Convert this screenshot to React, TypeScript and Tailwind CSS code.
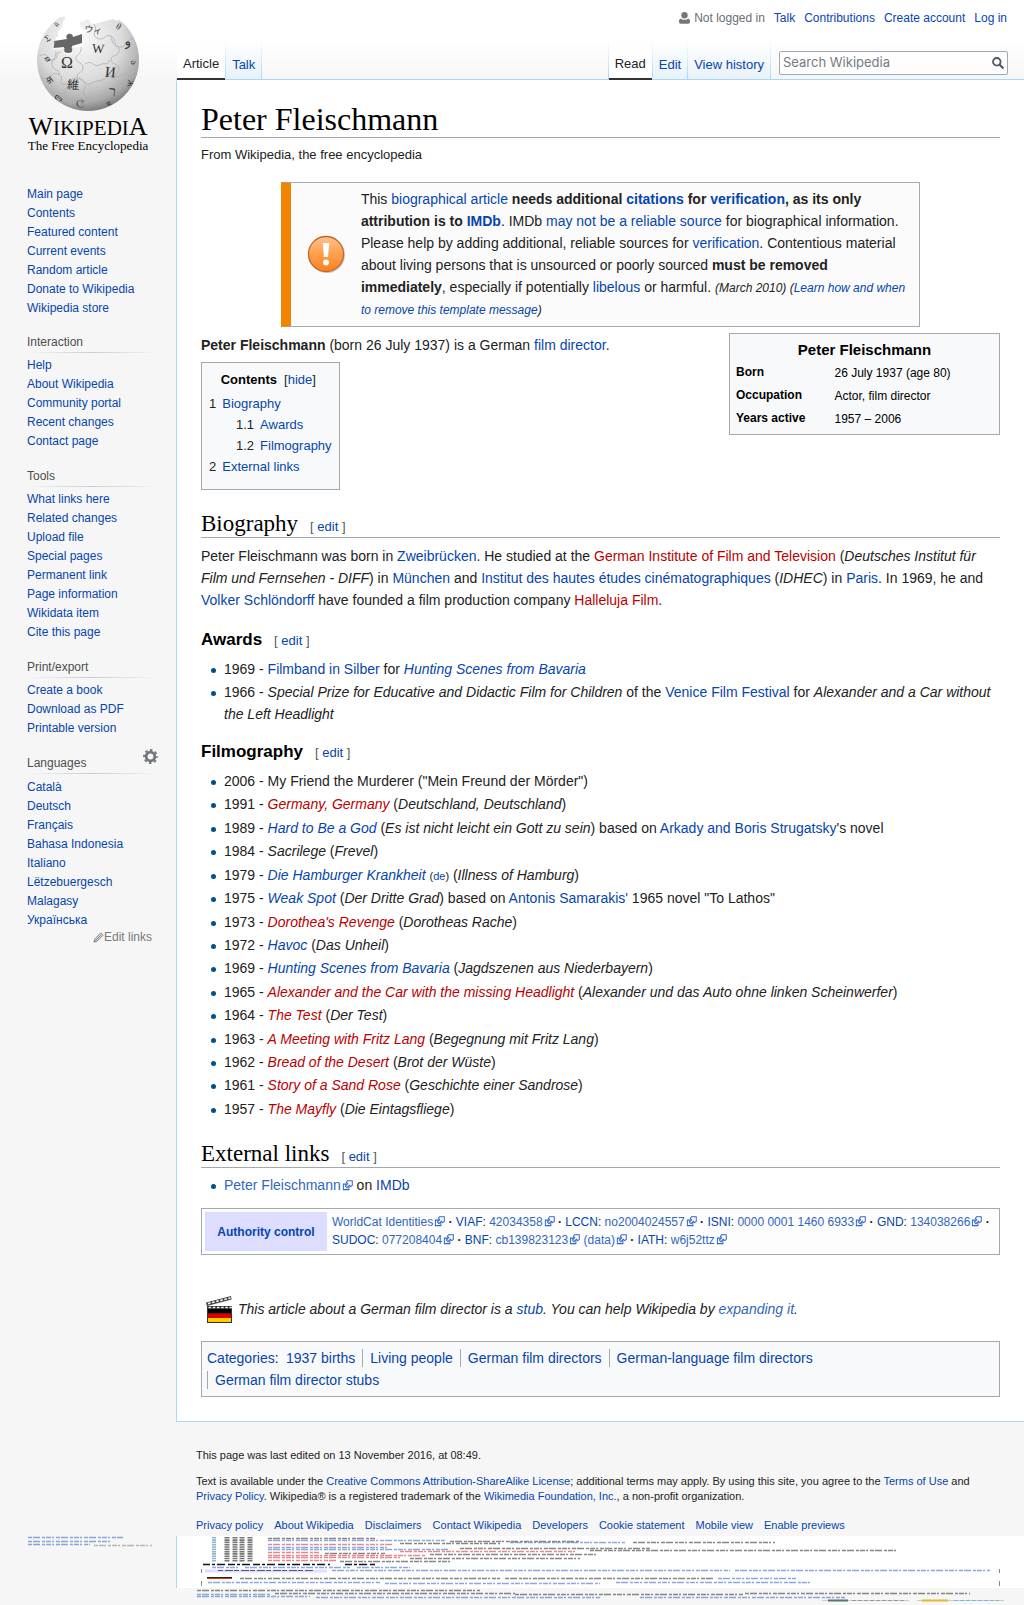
import React from 'react';

type P = { children?: React.ReactNode; className?: string };
const A = ({ children, className = '' }: P) => (
  <a href="#" className={`text-[#0645ad] ${className}`}>{children}</a>
);
const Red = ({ children }: P) => <a href="#" className="text-[#ba0000]">{children}</a>;

const ExtIcon = () => (
  <svg viewBox="0 0 12 12" className="ml-px inline-block size-[11px] align-[-1px]" fill="#fff" stroke="#36c" strokeWidth="1.100">
    <path d="M1.500 4.500h6v6h-6z" />
    <path d="M6 .8h5.200V6L9.400 7.200 8 5.800 5.400 8.400 3.600 6.600 6.200 4 4.800 2.600z" />
  </svg>
);
const Ext = ({ children, className = '' }: P) => (
  <a href="#" className={`text-[#36b] ${className}`}>{children}<ExtIcon /></a>
);

const glyphs: [string, number, number, number, number][] = [
  ['Ω', 30, 51, 16, 0], ['W', 61, 36, 13, 4], ['И', 73, 60, 15, 6], ['維', 36, 72, 12, 3],
  ['ウィ', 56, 16, 9, 8], ['ר', 75, 79, 14, 6], ['و', 91, 28, 13, -10], ['Σ', 12, 24, 9, -30],
  ['θ', 80, 12, 9, 30], ['ල', 43, 88, 11, 10], ['ø', 8, 43, 10, 70], ['क', 10, 65, 9, 55],
  ['ა', 94, 46, 9, 80], ['Ж', 91, 66, 8, 100], ['ლ', 20, 83, 8, 40], ['म', 73, 89, 7, -25], ['й', 21, 9, 7, -45],
];
const Globe = () => (
  <svg viewBox="0 0 103 94" className="mx-auto block h-[94px] w-[103px]">
    <defs>
      <radialGradient id="ball" cx=".42" cy=".3" r=".72">
        <stop offset="0" stopColor="#fafafa" />
        <stop offset=".55" stopColor="#dcdcdc" />
        <stop offset=".85" stopColor="#a9a9a9" />
        <stop offset="1" stopColor="#737373" />
      </radialGradient>
      <clipPath id="ballclip"><circle cx="51" cy="43" r="51" /></clipPath>
    </defs>
    <g clipPath="url(#ballclip)">
      <path
        fill="url(#ball)"
        d="M-1-9H28V2C24 6 27 10 23 13C18 15 24 18 19 21L17 24L19 30H45V17L49 15C45 12 43 9 43 4C46 6 48 5 48 3C51 2 53 2 53 6L57 7L76 2L80 4L86 1V-9H104V95H-1z"
      />
      <path fill="#666" d="M17 24l13-2c-3-6 6-7 6-2l9-3v9l-10 3c0 2 3 6-3 7-7 0-5-4-5-6l-11 1z" />
      <path fill="none" stroke="#fff" strokeWidth=".8" d="M17 25l-1 7 11-1c0 3-2 6 5 6 6-1 3-5 3-7l10-3" />
      <g fill="none" stroke="#b0b0b0" strokeWidth=".8">
        <path d="M2 39c11-5 7 5 14 4s1-8 8-8M44 30c1 8-6 7-5 12s8 3 7 9-6 4-6 8 6 3 8 8-4 7-1 11 9 0 9 7" />
        <path d="M4 61c12 3 9-7 17-4s-1 10 6 10 5-7 14-6 6 9 14 5 10-1 15-6 10 3 15-2 6 4 15 0" />
        <path d="M57 7c5 8-4 10 3 14s8-5 14-2 2 11 9 11 5-7 14-9M74 19c2 14 9 8 8 15s-9 3-8 9 9 3 8 9-5 4-5 8 8 4 6 10-9 2-9 8M48 47c8-5 8 4 14 1s10 1 10-5" />
        <path d="M19 34c0 10-5 7-4 14s8 3 7 10M11 76c9-5 6 4 13 2s3-9 9-10M24 79c1 9 8 2 9 9M33 88c9-8 12 3 19-4s10 3 14-4 10 1 13-5" />
      </g>
      <g fill="#333" fontFamily="'Liberation Serif','DejaVu Serif','Noto Sans CJK JP',serif" textAnchor="middle">
        {glyphs.map(([g, x, y, s, r]) => (
          <text key={g} x={x} y={y} fontSize={s} transform={`rotate(${r} ${x} ${y})`}>{g}</text>
        ))}
      </g>
    </g>
  </svg>
);

const Logo = () => (
  <a href="#" aria-label="Wikipedia" className="block pt-[17px] text-black">
    <Globe />
    <span className="mt-[5px] block text-center font-['Liberation_Serif',serif] text-[21px] leading-[22px] whitespace-nowrap">
      <span className="text-[26px]">W</span>IKIPEDI<span className="text-[26px]">A</span>
    </span>
    <span className="block text-center font-['Liberation_Serif',serif] text-[13px] leading-[14px]">The Free Encyclopedia</span>
  </a>
);

const menus: { title: string; items: string[] }[] = [
  { title: '', items: ['Main page', 'Contents', 'Featured content', 'Current events', 'Random article', 'Donate to Wikipedia', 'Wikipedia store'] },
  { title: 'Interaction', items: ['Help', 'About Wikipedia', 'Community portal', 'Recent changes', 'Contact page'] },
  { title: 'Tools', items: ['What links here', 'Related changes', 'Upload file', 'Special pages', 'Permanent link', 'Page information', 'Wikidata item', 'Cite this page'] },
  { title: 'Print/export', items: ['Create a book', 'Download as PDF', 'Printable version'] },
  { title: 'Languages', items: ['Català', 'Deutsch', 'Français', 'Bahasa Indonesia', 'Italiano', 'Lëtzebuergesch', 'Malagasy', 'Українська'] },
];

const Gear = () => (
  <button type="button" aria-label="Language settings" className="mb-[14px]">
    <svg viewBox="0 0 16 16" className="size-[15px]" fill="none" stroke="#72777d">
      <circle cx="8" cy="8" r="4.600" strokeWidth="3" />
      <circle cx="8" cy="8" r="6.900" strokeWidth="2" strokeDasharray="2.700 2.720" strokeDashoffset="1.350" />
    </svg>
  </button>
);

const Sidebar = () => (
  <div className="w-44 shrink-0 text-xs">
    <Logo />
    <div className="pt-8 pr-[18px] pl-[27px]">
      {menus.map(({ title, items }) => (
        <nav key={title} className="mb-[15px] first:mb-[14px]">
          {title && (
            <>
              <div className="flex h-5 items-center justify-between text-[#4d4d4d]">
                <h3>{title}</h3>
                {title === 'Languages' && <Gear />}
              </div>
              <div className={`h-px bg-linear-to-r from-transparent via-[#c8ccd1] to-transparent ${title === 'Languages' ? 'mb-1' : 'mb-[3px]'}`} />
            </>
          )}
          <ul>
            {items.map((i) => <li key={i} className="leading-[19px]"><A>{i}</A></li>)}
          </ul>
          {title === 'Languages' && (
            <a href="#" className="flex items-center justify-end pr-1.5 leading-[14px] text-[#797979]">
              <svg viewBox="0 0 12 12" className="size-[11px]" fill="#ddd" stroke="#797979">
                <path d="M1 11l1-3.500L8.500 1l2.500 2.500L4.500 10z" />
                <path d="M2.500 9.500l6-6" />
              </svg>
              Edit links
            </a>
          )}
        </nav>
      ))}
    </div>
  </div>
);

const Tab = ({ children, active }: P & { active?: boolean }) => (
  <li className={`relative flex h-10 items-center px-[6px] pt-2.5 ${active ? 'border-b-2 border-[#333] bg-linear-to-b from-transparent to-white to-40%' : 'border-b border-[#a7d7f9] bg-linear-to-b from-white to-[#e8f2f8]'}`}>
    <a href="#" className={active ? 'text-[#222]' : 'text-[#0645ad]'}>{children}</a>
    <span className="absolute top-0 -right-px h-full w-px bg-linear-to-b from-white to-[#a7d7f9]" />
  </li>
);

const Header = () => (
  <header>
    <ul className="flex h-[35px] items-center justify-end gap-[9px] pr-[17px] text-xs">
      <li className="flex items-center gap-1 text-[#6b6e72]">
        <svg viewBox="0 0 11 12" className="h-3 w-[11px]" fill="#72777d">
          <circle cx="5.500" cy="3.200" r="3.200" />
          <path d="M1.500 6.500c2 1.700 6 1.700 8 0 1 .5 1.500 1.500 1.500 3 0 1.500-.6 2.200-1.800 2.200H1.800C.6 11.700 0 11 0 9.500c0-1.500.5-2.500 1.500-3z" />
        </svg>
        Not logged in
      </li>
      {['Talk', 'Contributions', 'Create account', 'Log in'].map((t) => <li key={t}><A>{t}</A></li>)}
    </ul>
    <div className="flex h-[45px] items-end justify-between text-[13px]">
      <ul className="flex gap-px"><Tab active>Article</Tab><Tab>Talk</Tab></ul>
      <div className="flex items-end">
        <ul className="relative flex gap-px">
          <li aria-hidden className="absolute top-0 -left-px h-full w-px bg-linear-to-b from-white to-[#a7d7f9]" />
          <Tab active>Read</Tab><Tab>Edit</Tab><Tab>View history</Tab>
        </ul>
        <form className="mr-4 mb-[5px] ml-[9px] flex h-6 w-[229px] items-center rounded-xs border border-[#a2a9b1] bg-white/70 px-[3px]">
          <input aria-label="Search Wikipedia" placeholder="Search Wikipedia" className="min-w-0 flex-1 font-[Inter,sans-serif] text-[13px] outline-none placeholder:text-[#757b80]" />
          <button type="button" aria-label="Search">
            <svg viewBox="0 0 12 12" className="size-3" fill="none" stroke="#54595d" strokeWidth="1.800">
              <circle cx="4.800" cy="4.800" r="3.800" /><path d="M7.500 7.500l4 4" strokeWidth="2.200" />
            </svg>
          </button>
        </form>
      </div>
    </div>
  </header>
);

const Edit = () => (
  <span className="ml-3 font-['Liberation_Sans',sans-serif] text-[13px] leading-none font-normal text-[#54595d]">[ <A>edit</A> ]</span>
);
const H2 = ({ children, className = '' }: P) => (
  <h2 className={`border-b border-[#a2a9b1] font-['Liberation_Serif',serif] text-[23px] leading-[26px] text-black ${className}`}>{children}<Edit /></h2>
);
const H3 = ({ children }: P) => (
  <h3 className="text-[17px] leading-[26px] font-bold text-black">{children}<Edit /></h3>
);
const Li = ({ children }: P) => (
  <li className="flex">
    <span className="mt-[10px] mr-[8px] ml-[10px] size-[5px] shrink-0 rounded-full bg-[#00528c]" />
    <div>{children}</div>
  </li>
);

const Warning = () => (
  <svg viewBox="0 0 40 40" className="size-10">
    <defs>
      <linearGradient id="warn" x2="0" y2="1"><stop stopColor="#ffc18c" /><stop offset=".5" stopColor="#ffa04e" /><stop offset="1" stopColor="#f9801e" /></linearGradient>
    </defs>
    <circle cx="21" cy="21" r="18" fill="#000" opacity=".2" />
    <circle cx="20" cy="20" r="17.500" fill="url(#warn)" stroke="#c8642a" strokeWidth="1.300" />
    <path d="M16.800 9h6.400l-1.200 14h-4z" fill="#fff" /><circle cx="20" cy="28.500" r="2.900" fill="#fff" />
  </svg>
);

const Notice = () => (
  <div className="mx-[10%] flex items-center border border-l-[10px] border-[#a2a9b1] border-l-[#f28500] bg-[#fbfbfb] pt-[5px] pb-[6px]">
    <div className="ml-[15px] w-[55px] shrink-0"><Warning /></div>
    <div className="pr-2 leading-[22px]">
      This <A>biographical article</A> <b>needs additional <A>citations</A> for <A>verification</A>, as its only attribution is to <A>IMDb</A></b>. IMDb <A>may not be a reliable source</A> for biographical information. Please help by adding additional, reliable sources for <A>verification</A>. Contentious material about living persons that is unsourced or poorly sourced <b>must be removed immediately</b>, especially if potentially <A>libelous</A> or harmful. <i className="text-xs leading-none">(March 2010) (<A>Learn how and when to remove this template message</A>)</i>
    </div>
  </div>
);

const Infobox = () => (
  <table className="float-right mt-[6px] w-[271px] border border-[#a2a9b1] bg-[#f8f9fa] text-left text-xs text-black">
    <caption className="hidden">Personal details</caption>
    <tbody>
      <tr><th colSpan={2} className="pt-[5px] text-center text-[15px] leading-[22px]">Peter Fleischmann</th></tr>
      {[['Born', '26 July 1937 (age 80)'], ['Occupation', 'Actor, film director'], ['Years active', '1957 – 2006']].map(([k, v]) => (
        <tr key={k}><th className="w-[105px] pl-[6px] leading-[23px]">{k}</th><td>{v}</td></tr>
      ))}
      <tr><td colSpan={2} className="h-1" /></tr>
    </tbody>
  </table>
);

const Toc = () => (
  <div className="mt-[6px] h-[128px] w-fit border border-[#a2a9b1] bg-[#f8f9fa] px-[7px] pt-[6px] text-[13px]">
    <div className="pr-1 text-center leading-[22px]"><b className="mr-[7px] text-black">Contents</b>[<button type="button" className="text-[#0645ad]">hide</button>]</div>
    <ul className="mt-[2px] leading-[21px]">
      <li>1<A className="ml-[6px]">Biography</A>
        <ul className="ml-[27px]">
          <li>1.1<A className="ml-[6px]">Awards</A></li>
          <li>1.2<A className="ml-[6px]">Filmography</A></li>
        </ul>
      </li>
      <li>2<A className="ml-[6px]">External links</A></li>
    </ul>
  </div>
);

const films: React.ReactNode[] = [
  <>2006 - My Friend the Murderer ("Mein Freund der Mörder")</>,
  <>1991 - <i><Red>Germany, Germany</Red></i> (<i>Deutschland, Deutschland</i>)</>,
  <>1989 - <i><A>Hard to Be a God</A></i> (<i>Es ist nicht leicht ein Gott zu sein</i>) based on <A>Arkady and Boris Strugatsky</A>'s novel</>,
  <>1984 - <i>Sacrilege</i> (<i>Frevel</i>)</>,
  <>1979 - <i><A>Die Hamburger Krankheit</A></i> <span className="text-[11px] leading-none">(<A>de</A>)</span> (<i>Illness of Hamburg</i>)</>,
  <>1975 - <i><A>Weak Spot</A></i> (<i>Der Dritte Grad</i>) based on <A>Antonis Samarakis'</A> 1965 novel "To Lathos"</>,
  <>1973 - <i><Red>Dorothea's Revenge</Red></i> (<i>Dorotheas Rache</i>)</>,
  <>1972 - <i><A>Havoc</A></i> (<i>Das Unheil</i>)</>,
  <>1969 - <i><A>Hunting Scenes from Bavaria</A></i> (<i>Jagdszenen aus Niederbayern</i>)</>,
  <>1965 - <i><Red>Alexander and the Car with the missing Headlight</Red></i> (<i>Alexander und das Auto ohne linken Scheinwerfer</i>)</>,
  <>1964 - <i><Red>The Test</Red></i> (<i>Der Test</i>)</>,
  <>1963 - <i><Red>A Meeting with Fritz Lang</Red></i> (<i>Begegnung mit Fritz Lang</i>)</>,
  <>1962 - <i><Red>Bread of the Desert</Red></i> (<i>Brot der Wüste</i>)</>,
  <>1961 - <i><Red>Story of a Sand Rose</Red></i> (<i>Geschichte einer Sandrose</i>)</>,
  <>1957 - <i><Red>The Mayfly</Red></i> (<i>Die Eintagsfliege</i>)</>,
];

const Authority = () => (
  <table className="mt-3 w-full border-separate border-spacing-[3px] border border-[#a2a9b1] bg-[#fdfdfd] text-xs leading-[18px]">
    <tbody>
      <tr>
        <th className="w-[122px] bg-[#ddddff] p-0"><A>Authority control</A></th>
        <td className="pt-px pb-[2px] pl-[2px]">
          <Ext>WorldCat Identities</Ext> <b>·</b> <A>VIAF</A>: <Ext>42034358</Ext> <b>·</b> <A>LCCN</A>: <Ext>no2004024557</Ext> <b>·</b> <A>ISNI</A>: <Ext>0000 0001 1460 6933</Ext> <b>·</b> <A>GND</A>: <Ext>134038266</Ext> <b>·</b><br />
          <A>SUDOC</A>: <Ext>077208404</Ext> <b>·</b> <A>BNF</A>: <Ext>cb139823123</Ext> <Ext>(data)</Ext> <b>·</b> <A>IATH</A>: <Ext>w6j52ttz</Ext>
        </td>
      </tr>
    </tbody>
  </table>
);

const Clapper = () => (
  <svg viewBox="0 0 28 28" className="h-7 w-7 shrink-0">
    <path d="M1 7.500L26 1l.6 3.500L1.800 11z" fill="#444" />
    <path d="M3 8.600l22.500-5.700" stroke="#eee" strokeWidth="1.600" strokeDasharray="2.600 1.600" />
    <path d="M2 11h25v17H2z" fill="#333" />
    <path d="M3.500 12.500H27" stroke="#eee" strokeWidth="1.600" strokeDasharray="2.600 1.600" />
    <path d="M3 14h23v4.500H3z" fill="#000" /><path d="M3 18.500h23v4.500H3z" fill="#d00" /><path d="M3 23h23v4H3z" fill="#fc0" />
  </svg>
);

const Article = () => (
  <main className="border-y border-l border-[#a7d7f9] border-t-transparent bg-white pr-6 pb-6 pl-6 text-[14px] leading-[22px] text-[#222]">
    <h1 className="border-b border-[#a2a9b1] pt-[21px] font-['Liberation_Serif',serif] text-[32px] leading-[35px] text-black">Peter Fleischmann</h1>
    <p className="mt-[6px] mb-[16px] text-[13px]">From Wikipedia, the free encyclopedia</p>
    <Notice />
    <Infobox />
    <p className="pt-[7px]"><b>Peter Fleischmann</b> (born 26 July 1937) is a German <A>film director</A>.</p>
    <Toc />
    <H2 className="mt-[21px]">Biography</H2>
    <p className="mt-[7px]">Peter Fleischmann was born in <A>Zweibrücken</A>. He studied at the <Red>German Institute of Film and Television</Red> (<i>Deutsches Institut für Film und Fernsehen - DIFF</i>) in <A>München</A> and <A>Institut des hautes études cinématographiques</A> (<i>IDHEC</i>) in <A>Paris</A>. In 1969, he and <A>Volker Schlöndorff</A> have founded a film production company <Red>Halleluja Film</Red>.</p>
    <div className="mt-4"><H3>Awards</H3></div>
    <ul className="mt-[5px] flex flex-col gap-px">
      <Li>1969 - <A>Filmband in Silber</A> for <i><A>Hunting Scenes from Bavaria</A></i></Li>
      <Li>1966 - <i>Special Prize for Educative and Didactic Film for Children</i> of the <A>Venice Film Festival</A> for <i>Alexander and a Car without the Left Headlight</i></Li>
    </ul>
    <div className="mt-[14px]"><H3>Filmography</H3></div>
    <ul className="mt-[5px] grid min-h-[350px] content-between">
      {films.map((f, i) => <Li key={i}>{f}</Li>)}
    </ul>
    <H2 className="mt-[21px]">External links</H2>
    <ul className="mt-[6px]"><Li><Ext>Peter Fleischmann</Ext> on <A>IMDb</A></Li></ul>
    <Authority />
    <div className="mt-[40px] flex items-center pl-1">
      <Clapper />
      <i className="ml-[5px]">This article about a German film director is a <A>stub</A>. You can help Wikipedia by <a href="#" className="text-[#36b]">expanding it</a>.</i>
    </div>
    <div className="mt-[18px] flex border border-[#a2a9b1] bg-[#f8f9fa] px-[5px] py-[5px]">
      <span className="-mr-[75px] w-[75px] shrink-0"><A>Categories</A>:</span>
      <ul className="flex flex-1 flex-wrap">
        {['1937 births', 'Living people', 'German film directors', 'German-language film directors', 'German film director stubs'].map((c, i) => (
          <li key={c} className={`my-[2px] leading-[18px] ${i ? 'border-l border-[#a2a9b1] px-[7px]' : 'pr-[7px] pl-[79px]'} ${i === 4 ? 'mr-[150px]' : ''}`}><A>{c}</A></li>
        ))}
      </ul>
    </div>
  </main>
);

const Footer = () => (
  <footer className="pt-[26px] pr-5 pb-[3px] pl-5 text-[11px] leading-[15px] text-[#222]">
    <p>This page was last edited on 13 November 2016, at 08:49.</p>
    <p className="mt-[11px]">Text is available under the <A>Creative Commons Attribution-ShareAlike License</A>; additional terms may apply. By using this site, you agree to the <A>Terms of Use</A> and <A>Privacy Policy</A>. Wikipedia® is a registered trademark of the <A>Wikimedia Foundation, Inc.</A>, a non-profit organization.</p>
    <ul className="mt-[14px] flex gap-[11px] whitespace-nowrap">
      {['Privacy policy', 'About Wikipedia', 'Disclaimers', 'Contact Wikipedia', 'Developers', 'Cookie statement', 'Mobile view', 'Enable previews'].map((t) => <li key={t}><A>{t}</A></li>)}
    </ul>
  </footer>
);

const K = '#555', B = '#5b84cf', R = '#dd5560', G = '#999';
const streaks: [number, number, number, string][] = [
  [28, 123, 1, B], [28, 112, 5, B], [28, 90, 8, B], [94, 152, 9, G],
  [268, 376, 2, K], [268, 445, 4, B], [450, 580, 5, K], [510, 625, 6, B], [633, 775, 6, K], [268, 394, 8, R], [400, 500, 7, K],
  [268, 387, 11, B], [268, 450, 13, B], [460, 650, 12, K], [400, 575, 15, R], [590, 896, 14, K],
  [268, 320, 16, R], [325, 385, 17, K], [268, 425, 19, R], [430, 597, 18, K], [268, 400, 21, R], [410, 580, 22, K], [268, 336, 24, R], [340, 452, 25, K],
  [212, 240, 31, B], [245, 350, 31, B], [357, 410, 31, B],
  [332, 730, 34, B], [735, 990, 34, B],
  [240, 500, 42, K], [505, 715, 42, K], [718, 796, 42, B],
  [208, 380, 46, B], [385, 600, 47, B], [616, 812, 46, B],
  [197, 480, 54, K], [197, 270, 58, B], [275, 515, 57, K], [515, 743, 58, K], [745, 970, 57, K], [197, 310, 60, B], [316, 600, 61, B], [640, 845, 61, B],
];
const Squashed = () => (
  <svg aria-hidden viewBox="0 0 1024 69" preserveAspectRatio="none" className="block h-[69px] w-full bg-[#f6f6f6]">
    <path d="M177 0h847v52H177z" fill="#fff" />
    <path d="M176.500 0v52" stroke="#a7d7f9" />
    {streaks.map(([a, b, y, c], i) => (
      <path key={i} d={`M${a} ${y + 0.5}H${b}`} stroke={c} strokeWidth="1.400" strokeDasharray="4 1 7 2 3 1 5 1 2 2" opacity=".7" />
    ))}
    <path d="M214 1v25" stroke="#8fb6d4" strokeWidth="4" strokeDasharray="1.600 .7" />
    <path d="M227 1v25M235 1v25M242 1v25M250 1v25" stroke="#777" strokeWidth="5" strokeDasharray="1.600 .7" />
    <path d="M203 28.500h127M345 28.500h30" stroke="#111" strokeWidth="1.500" strokeDasharray="7 2 3 2 8 3" />
    <path d="M201.500 33v4M201.500 45v5M999.500 33v4M999.500 45v5" stroke="#889" />
    <path d="M205 33.500h122v3H205z" fill="#ddf" />
    <path d="M218 34.500h96" stroke="#557" strokeDasharray="5 2 8 1" />
    <path d="M207 41.500h25" stroke="#222" /><path d="M207 42.500h25" stroke="#c40" />
    <path d="M822 64.500h87M917 64.500h87" stroke="#ccc" />
    <path d="M828 64.500h20" stroke="#576" strokeWidth="2" /><path d="M922 64.500h26" stroke="#db3" strokeWidth="2" />
    <path d="M852 64.500h52" stroke="#999" strokeDasharray="4 2" /><path d="M954 64.500h45" stroke="#7bc" strokeDasharray="4 2" />
  </svg>
);

export default function App() {
  return (
    <div className="bg-[#f6f6f6] font-['Liberation_Sans',Arial,sans-serif]">
      <div className="flex">
        <div className="w-44 shrink-0 bg-linear-to-b from-white from-[40px] to-[#f6f6f6] to-[80px]"><Sidebar /></div>
        <div className="min-w-0 flex-1">
          <div className="border-b border-[#a7d7f9] bg-linear-to-b from-white from-50% to-[#f6f6f6] pl-px"><div className="-mb-px"><Header /></div></div>
          <Article />
          <Footer />
        </div>
      </div>
      <Squashed />
    </div>
  );
}
